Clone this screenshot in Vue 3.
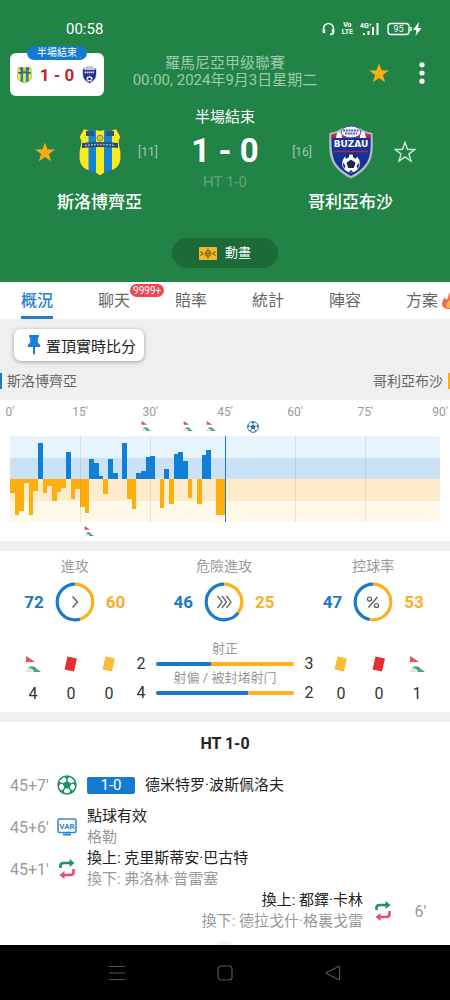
<script setup>
const tabs = [
  { label: '概況', active: true },
  { label: '聊天', badge: '9999+' },
  { label: '賠率' },
  { label: '統計' },
  { label: '陣容' },
  { label: '方案', hot: true },
]

const SLOTS = 92
const at = (slot) => ({ left: `${(slot / SLOTS) * 100}%` })

const ticks = [
  { label: "0'", slot: 0 },
  { label: "15'", slot: 15 },
  { label: "30'", slot: 30 },
  { label: "45'", slot: 46 },
  { label: "60'", slot: 61 },
  { label: "75'", slot: 76 },
  { label: "90'", slot: 92 },
]
const gridLines = [15, 30, 61, 76]

// Positive values: home pressure, negative values: away pressure
const pressure = [
  -14, -36, -32, -4, -36, -12, 36, -14, -7, -22, -13, -9, 27, -20, -10, -28,
  -34, 20, 16, 3, -15, 20, 6, 0, 36, -20, -30, 6, 8, 22, 23, 0, -29, 10, -25,
  25, 27, 18, -19, 0, -25, 24, 29, 0, -36, -36,
]
const bars = pressure.map((v, i) => ({ x: i, y: v > 0 ? 43 - v : 43, h: Math.abs(v), home: v > 0 }))

const homeCorners = [29, 38, 43]
const awayCorners = [17]

const rings = [
  { title: '進攻', home: 72, away: 60, icon: 'one' },
  { title: '危險進攻', home: 46, away: 25, icon: 'three' },
  { title: '控球率', home: 47, away: 53, icon: 'percent' },
]
const share = (a, b) => (a / (a + b)) * 100

const shots = [
  { title: '射正', home: 2, away: 3 },
  { title: '射偏 / 被封堵射门', home: 4, away: 2 },
]
const homeCards = [
  { kind: 'corner', n: 4 },
  { kind: 'red', n: 0 },
  { kind: 'yellow', n: 0 },
]
const awayCards = [
  { kind: 'yellow', n: 0 },
  { kind: 'red', n: 0 },
  { kind: 'corner', n: 1 },
]

const events = [
  { time: "45+7'", kind: 'goal', score: '1-0', main: '德米特罗·波斯佩洛夫' },
  { time: "45+6'", kind: 'var', main: '點球有效', sub: '格勒' },
  { time: "45+1'", kind: 'sub', main: '換上: 克里斯蒂安·巴古特', sub: '換下: 弗洛林·普雷塞' },
  { time: "6'", kind: 'sub', main: '換上: 都鐸·卡林', sub: '換下: 德拉戈什·格裏戈雷', away: true },
]
</script>

<template>
  <div class="page">
    <svg class="defs" aria-hidden="true">
      <symbol id="star" viewBox="0 0 24 24">
        <path d="M12 1.500l2.700 7.600 8 .2-6.400 4.900 2.300 7.800-6.600-4.600L5.400 22l2.300-7.800L1.300 9.300l8-.2z" />
      </symbol>
      <symbol id="ball" viewBox="0 0 24 24">
        <circle cx="12" cy="12" r="10.800" fill="#fff" stroke="currentColor" stroke-width="1.800" />
        <path d="M12 7l5 3.500-1.900 5.700H8.900L7 10.500z" fill="currentColor" />
        <path d="M12 7.500V3M16.400 10.700l4.800-1.500M14.700 15.800l3 4M9.300 15.800l-3 4M7.600 10.700L2.800 9.200" stroke="currentColor" stroke-width="1.700" />
        <path d="M7.500 1.500h9L12 5.200zM22.800 7.500v7.500l-3.500-5.500zM1.200 7.500v7.500l3.500-5.500zM14 22.700l6.500-4.700-4.200.3zM10 22.700l-6.500-4.700 4.200.3z" fill="currentColor" />
      </symbol>
      <symbol id="corner" viewBox="0 0 16 16">
        <path d="M1 0l9 6H1z" fill="#d9505a" />
        <path d="M0 16l4-5 11 5z" fill="#d5eade" />
        <path d="M3 12c3-3 7-2 9 1l4 3H9c0-2-2-4-6-4z" fill="#4aa677" />
      </symbol>
      <symbol id="crest-home" viewBox="0 0 44 50">
        <clipPath id="home-shape">
          <path d="M6 1.500q5 3 10 .8 6 2 12 0 5 2 10-.8l5 8.500q-3 3-1.500 8 2 6 1.500 14-1 9-10 12-8 1.500-11 5-3-3.500-11-5-9-3-10-12-.5-8 1.500-14Q4 13 1 10z" />
        </clipPath>
        <g clip-path="url(#home-shape)">
          <path d="M0 0h44v50H0z" fill="#f6ed1c" />
          <path d="M10.500 0h7.500v50h-7.500zM26 0h8v50h-8z" fill="#1583d6" />
          <path d="M8 4h8v5H8zM28 4h8v5h-8z" fill="#31557c" />
          <circle cx="22" cy="11" r="3" fill="#d8c24b" stroke="#77723d" stroke-width=".8" />
          <path d="M4 16q18-2 36 0v5q-18-2-36 0z" fill="#284d78" />
          <path d="M7 18.500q15-2 30 0" stroke="#91b4c4" stroke-width="1.500" stroke-dasharray="2 1" fill="none" />
        </g>
        <path d="M6 1.500q5 3 10 .8 6 2 12 0 5 2 10-.8l5 8.500q-3 3-1.500 8 2 6 1.500 14-1 9-10 12-8 1.500-11 5-3-3.500-11-5-9-3-10-12-.5-8 1.500-14Q4 13 1 10z" fill="none" stroke="#426a55" stroke-width="1" />
      </symbol>
      <symbol id="crest-away" viewBox="0 0 44 54">
        <path d="M.5 8Q8 7 13 3h18q5 4 12.500 5c.5 12 1 23-4 31Q34 48 22 53.500 10 48 4.500 39C-.5 31 0 20 .5 8z" fill="#b9bcc6" />
        <path d="M2.500 10Q9 8.500 14 5h16q5 3.500 11.500 5c.5 11 .5 21-4 28Q32 46 22 51 12 46 6.500 38 2 31 2.500 10z" fill="#17309a" />
        <path d="M2.500 13V9.500Q9 8.500 14 5h16q5 3.500 11.500 4.500V13z" fill="#c02c3c" />
        <path d="M8 8l5-3v8H7zM36 8l-5-3v8h6z" fill="#fff" />
        <ellipse cx="22" cy="7" rx="10" ry="6" fill="#f4f6fc" stroke="#3b4c98" />
        <path d="M14 5.500h16M16 8.500h12" stroke="#5466a5" stroke-width="1.800" stroke-dasharray="2 .7" />
        <path d="M3 13h38v11H3z" fill="#17309a" />
        <path d="M5 26.500h34" stroke="#b02840" stroke-width="1.500" />
        <circle cx="22" cy="38.500" r="9" fill="#fff" />
        <path d="M22 34.500l4.500 3.300-1.700 5.200h-5.600l-1.700-5.200zM16 30.500l4-1.500v3l-3 2zM28 30.500L24 29v3l3 2zM13.500 37l3 4-1.500 3zM30.500 37l-3 4 1.500 3zM20 47l2-2 2 2z" fill="#1b2550" />
      </symbol>
      <symbol id="swap" viewBox="0 0 16 20">
        <path d="M1.500 9V7q0-3 3-3H11" fill="none" stroke="#1d9260" stroke-width="2.600" />
        <path d="M10.500 0l5 4-5 4z" fill="#1d9260" />
        <path d="M14.500 10v3q0 3-3 3H5" fill="none" stroke="#df506b" stroke-width="2.600" />
        <path d="M5.500 12l-5 4 5 4z" fill="#df506b" />
      </symbol>
    </svg>

    <header class="hero">
      <div class="status">
        <span class="clock">00:58</span>
        <div class="status-icons">
          <svg width="13" height="14" viewBox="0 0 13 14" fill="none" stroke="#fff" stroke-width="1.500">
            <path d="M1.500 10V6.500a5 5 0 0 1 10 0V10q0 2.500-3.500 2.500" /><path d="M2 7v4M11 7v4" stroke-width="2.400" />
          </svg>
          <span class="volte"><span>Vo</span><span>LTE</span></span>
          <span class="signal">
            <svg width="20" height="14" viewBox="0 0 20 14" fill="#fff">
              <path d="M3 11h2v2H3zM7.500 9h2v4h-2zM12 5h2v8h-2zM16.500 1h2v12h-2z" />
              <text x="0" y="6" font-family="Roboto, sans-serif" font-weight="700" font-size="7">4G⁺</text>
            </svg>
          </span>
          <svg class="battery" width="36" height="14" viewBox="0 0 36 14" fill="none">
            <rect x="1" y="1.500" width="21" height="11" rx="3" stroke="#fff" stroke-width="1.400" />
            <path d="M24 5v4" stroke="#fff" stroke-width="1.500" />
            <text x="11.500" y="10" text-anchor="middle" font-family="Roboto, sans-serif" font-size="9" fill="#fff">95</text>
            <path d="M32 0l-6 8h3.500l-1 6 6-8H31z" fill="#fff" />
          </svg>
        </div>
      </div>

      <div class="titlebar">
        <div class="mini">
          <span class="mini-pill">半場結束</span>
          <svg width="15" height="18"><use href="#crest-home" /></svg>
          <span class="mini-score">1 - 0</span>
          <svg width="15" height="18" viewBox="0 0 44 54">
            <use href="#crest-away" width="44" height="54" />
            <path d="M7 19h30" stroke="#fff" stroke-width="5" stroke-dasharray="4 2" />
          </svg>
        </div>
        <div class="league">
          <div>羅馬尼亞甲级聯賽</div>
          <div>00:00, 2024年9月3日星期二</div>
        </div>
        <div class="actions">
          <button aria-label="收藏"><svg width="22" height="22" fill="#fbac14"><use href="#star" /></svg></button>
          <button aria-label="更多">
            <svg width="22" height="22" viewBox="0 0 22 22" fill="#fff"><circle cx="11" cy="2.800" r="2.600" /><circle cx="11" cy="11" r="2.600" /><circle cx="11" cy="19.200" r="2.600" /></svg>
          </button>
        </div>
      </div>

      <div class="match">
        <div class="team">
          <button aria-label="收藏斯洛博齊亞"><svg width="22" height="22" fill="#fbac14"><use href="#star" /></svg></button>
          <svg width="44" height="50"><use href="#crest-home" /></svg>
          <span class="rank home-rank">[11]</span>
          <strong class="team-name">斯洛博齊亞</strong>
        </div>
        <div class="result">
          <div class="phase">半場結束</div>
          <div class="score">1 - 0</div>
          <div class="half">HT 1-0</div>
        </div>
        <div class="team">
          <span class="rank away-rank">[16]</span>
          <svg width="44" height="54" viewBox="0 0 44 54">
            <use href="#crest-away" width="44" height="54" />
            <text x="22" y="22" text-anchor="middle" font-family="DejaVu Sans, sans-serif" font-weight="700" font-size="9" fill="#fff">BUZAU</text>
          </svg>
          <button aria-label="收藏哥利亞布沙"><svg width="22" height="22" fill="none" stroke="#d6ecdd" stroke-width="1.500"><use href="#star" /></svg></button>
          <strong class="team-name">哥利亞布沙</strong>
        </div>
      </div>

      <button class="animation">
        <svg width="18" height="13" viewBox="0 0 18 13">
          <rect width="18" height="13" rx="1" fill="#f5b52d" />
          <g fill="none" stroke="#7b6a1e" stroke-width="1.300"><circle cx="9" cy="6.500" r="2.600" /><path d="M9 1.500v3M9 8.500v3M7 6.500h4M1.500 4.500L4 6.500l-2.500 2M16.500 4.500L14 6.500l2.500 2" /></g>
        </svg>
        動畫
      </button>
    </header>

    <nav class="tabs">
      <button v-for="t in tabs" :key="t.label" :class="['tab', { active: t.active }]">
        {{ t.label }}
        <span v-if="t.badge" class="badge">{{ t.badge }}</span>
        <svg v-if="t.hot" class="fire" width="14" height="17" viewBox="0 0 14 17">
          <path d="M7 0q1 4 4 6 3 3 3 6 0 5-7 5t-7-5q0-4 3-7 0 2 1.500 3Q7 5 7 0z" fill="#ee6a4d" />
          <path d="M7 8q3 3 3 5.500 0 2.500-3 2.500t-3-2.500Q4 11 7 8z" fill="#f9b24e" />
        </svg>
      </button>
    </nav>

    <section class="pinned">
      <button class="pin">
        <svg width="14" height="20" viewBox="0 0 14 20" fill="#1a7fd6"><path d="M2 0h10v2.500h-1.200v5Q13.500 9 13.500 12H8v6.500L7 20l-1-1.500V12H.5q0-3 2.700-4.500v-5H2z" /></svg>
        置頂實時比分
      </button>
      <div class="sides">
        <span class="side home-side">斯洛博齊亞</span>
        <span class="side away-side">哥利亞布沙</span>
      </div>
    </section>

    <section class="chart">
      <div class="track axis">
        <span v-for="t in ticks" :key="t.label" class="on-track" :style="at(t.slot)">{{ t.label }}</span>
      </div>
      <div class="track marks">
        <svg v-for="c in homeCorners" :key="c" class="on-track" :style="at(c)" width="10" height="10"><use href="#corner" /></svg>
        <svg class="on-track goal-mark" :style="at(52)" width="12" height="12"><use href="#ball" /></svg>
      </div>
      <div class="plot">
        <svg class="bars" viewBox="0 0 92 86" preserveAspectRatio="none" shape-rendering="crispEdges">
          <rect v-for="b in bars" :key="b.x" :x="b.x" :y="b.y" width="1" :height="b.h" :fill="b.home ? '#0f80d8' : '#feae0d'" />
        </svg>
        <i v-for="g in gridLines" :key="g" class="line" :style="at(g)"></i>
        <i class="line now" :style="at(46)"></i>
      </div>
      <div class="track lower">
        <svg v-for="c in awayCorners" :key="c" class="on-track" :style="at(c)" width="10" height="10"><use href="#corner" /></svg>
      </div>
    </section>

    <section class="stats">
      <div class="rings">
        <div v-for="r in rings" :key="r.title" class="ring-cell">
          <div class="ring-title">{{ r.title }}</div>
          <div class="ring-row">
            <b class="home">{{ r.home }}</b>
            <svg width="40" height="40" viewBox="0 0 40 40" fill="none">
              <g stroke-width="3.200" transform="rotate(-90 20 20)">
                <circle cx="20" cy="20" r="17.800" stroke="#1a7ac8" pathLength="100" :stroke-dasharray="`${share(r.home, r.away)} 100`" :stroke-dashoffset="-share(r.away, r.home)" />
                <circle cx="20" cy="20" r="17.800" stroke="#fdb01c" pathLength="100" :stroke-dasharray="`${share(r.away, r.home)} 100`" />
              </g>
              <path v-if="r.icon === 'one'" d="M17.500 14.500l5 5.500-5 5.500" stroke="#666" stroke-width="1.500" />
              <path v-else-if="r.icon === 'three'" d="M13.500 14l4.500 6-4.500 6M18 14l4.500 6-4.500 6M22.500 14l4.500 6-4.500 6" stroke="#666" stroke-width="1.300" />
              <g v-else stroke="#555" stroke-width="1.200"><circle cx="16.500" cy="17" r="2" /><circle cx="23.500" cy="23.500" r="2" /><path d="M24.500 15l-9 10.500" /></g>
            </svg>
            <b class="away">{{ r.away }}</b>
          </div>
        </div>
      </div>

      <div class="counts">
        <div v-for="c in homeCards" :key="c.kind" class="count">
          <svg v-if="c.kind === 'corner'" width="16" height="16"><use href="#corner" /></svg>
          <svg v-else width="14" height="16" viewBox="0 0 14 16"><path d="M3.500.5l9.500 2-3 13-9.500-2z" :fill="c.kind === 'red' ? '#e22f34' : '#fabc35'" /></svg>
          <span>{{ c.n }}</span>
        </div>
        <div class="shots">
          <template v-for="s in shots" :key="s.title">
            <span class="shot-n">{{ s.home }}</span>
            <div class="shot-mid">
              <span class="shot-title">{{ s.title }}</span>
              <div class="shot-bar"><i :style="{ width: `${share(s.home, s.away)}%` }"></i></div>
            </div>
            <span class="shot-n">{{ s.away }}</span>
          </template>
        </div>
        <div v-for="c in awayCards" :key="c.kind" class="count">
          <svg v-if="c.kind === 'corner'" width="16" height="16"><use href="#corner" /></svg>
          <svg v-else width="14" height="16" viewBox="0 0 14 16"><path d="M3.500.5l9.500 2-3 13-9.500-2z" :fill="c.kind === 'red' ? '#e22f34' : '#fabc35'" /></svg>
          <span>{{ c.n }}</span>
        </div>
      </div>
    </section>

    <section class="events">
      <h2>HT 1-0</h2>
      <div v-for="e in events" :key="e.time" :class="['event', { right: e.away }]">
        <span class="time">{{ e.time }}</span>
        <span class="event-icon">
          <svg v-if="e.kind === 'goal'" class="goal-icon" width="20" height="20"><use href="#ball" /></svg>
          <svg v-else-if="e.kind === 'var'" width="20" height="18" viewBox="0 0 20 18" fill="none">
            <rect x="1" y="1" width="18" height="13.500" rx="1.500" stroke="#2c86cc" stroke-width="1.500" />
            <path d="M6 16.500h8" stroke="#2c86cc" stroke-width="2" />
            <text x="10" y="10.500" text-anchor="middle" font-family="Roboto, sans-serif" font-weight="700" font-size="8" fill="#2c86cc">VAR</text>
          </svg>
          <svg v-else width="16" height="20"><use href="#swap" /></svg>
        </span>
        <span v-if="e.score" class="event-score">{{ e.score }}</span>
        <div class="event-text">
          <div>{{ e.main }}</div>
          <div v-if="e.sub" class="muted">{{ e.sub }}</div>
        </div>
      </div>
      <i class="peek"></i>
    </section>

    <footer class="sysnav">
      <button aria-label="最近">
        <svg width="16" height="16" viewBox="0 0 16 16" stroke="#555"><path d="M0 1.500h16M0 8h16M0 14.500h16" /></svg>
      </button>
      <button aria-label="主頁">
        <svg width="16" height="16" viewBox="0 0 16 16" fill="none" stroke="#555" stroke-width="1.200"><rect x="1" y="1" width="14" height="14" rx="3" /></svg>
      </button>
      <button aria-label="返回">
        <svg width="16" height="16" viewBox="0 0 16 16" fill="none" stroke="#555" stroke-width="1.200"><path d="M14.500 2v12q0 1-1 .5L1.500 8.500q-1-.5 0-1l12-6q1-.5 1 .5z" /></svg>
      </button>
    </footer>
  </div>
</template>

<style>
body {
  margin: 0;
  background: #000;
}
</style>

<style scoped>
.page {
  display: flex;
  flex-direction: column;
  min-height: 100vh;
  overflow: hidden;
  background: #fff;
  color: #222;
  font-family: Roboto, "Noto Sans CJK SC", sans-serif;
  font-size: 15px;
}
.page * {
  box-sizing: border-box;
}
.defs {
  position: absolute;
  width: 0;
  height: 0;
}
button {
  padding: 0;
  border: 0;
  background: none;
  color: inherit;
  font: inherit;
  cursor: pointer;
}
svg {
  display: block;
  flex: none;
}

.hero {
  background: #228346;
  color: #fff;
  padding-bottom: 14px;
}
.status {
  display: flex;
  align-items: center;
  justify-content: space-between;
  height: 50px;
  padding: 8px 27px 0 66px;
}
.status-icons {
  display: flex;
  align-items: center;
  gap: 7px;
}
.volte {
  display: flex;
  flex-direction: column;
  align-items: center;
  font-size: 7px;
  font-weight: 700;
  line-height: 7px;
}
.titlebar {
  display: grid;
  grid-template-columns: 94px 1fr 94px;
  align-items: center;
  height: 46px;
  padding: 0 10px;
}
.mini {
  position: relative;
  display: flex;
  align-items: center;
  justify-content: space-between;
  align-self: end;
  height: 43px;
  padding: 0 7px;
  border-radius: 6px;
  background: #fff;
}
.mini-pill {
  position: absolute;
  top: -7px;
  left: 50%;
  width: 60px;
  margin-left: -30px;
  border-radius: 7px;
  background: #147bd0;
  font-size: 10px;
  line-height: 14px;
  text-align: center;
}
.mini-score {
  color: #c9202f;
  font-size: 17px;
  font-weight: 700;
}
.league {
  padding-bottom: 3px;
  color: #9ccbac;
  line-height: 17px;
  text-align: center;
  white-space: nowrap;
}
.actions {
  display: flex;
  justify-content: flex-end;
  gap: 21px;
  padding-right: 7px;
}
.match {
  display: grid;
  grid-template-columns: minmax(163px, 1fr) 88px minmax(163px, 1fr);
  padding: 11px 18px 0;
}
.team {
  display: grid;
  grid-template-columns: 1fr 55px 1fr;
  grid-template-rows: 54px 24px;
  row-gap: 11px;
  align-items: center;
  justify-items: center;
  padding-top: 18px;
}
.team-name {
  grid-column: 1 / 4;
  font-size: 17px;
  font-weight: 500;
  line-height: 24px;
}
.rank {
  color: #9ccbac;
  font-size: 12px;
}
.home-rank {
  justify-self: start;
  padding-left: 11px;
}
.away-rank {
  justify-self: end;
  padding-right: 11px;
}
.result {
  text-align: center;
  white-space: nowrap;
}
.phase {
  line-height: 20px;
}
.score {
  font-size: 33px;
  font-weight: 700;
  line-height: 48px;
}
.half {
  color: #5fa67a;
  line-height: 14px;
}
.animation {
  display: flex;
  align-items: center;
  justify-content: center;
  gap: 8px;
  width: 106px;
  height: 30px;
  margin: 24px auto 0;
  border-radius: 15px;
  background: #1c6a38;
  font-size: 13px;
  line-height: 16px;
}

.tabs {
  display: flex;
  gap: 45px;
  height: 37px;
  padding: 0 21px;
  color: #666;
  font-size: 16px;
}
.tab {
  position: relative;
  flex: none;
  border-bottom: 3px solid transparent;
  white-space: nowrap;
}
.tab.active {
  border-color: #1f7fcb;
  color: #1f7fcb;
  font-weight: 500;
}
.badge {
  position: absolute;
  top: 2px;
  left: 32px;
  padding: 0 3px;
  border-radius: 7px;
  background: #ee4750;
  color: #fff;
  font-size: 10px;
  font-weight: 400;
  line-height: 13px;
}
.fire {
  position: absolute;
  top: 10px;
  left: 36px;
}

.pinned {
  padding: 10px 0 11px;
  background: #efefef;
}
.pin {
  display: flex;
  align-items: center;
  gap: 5px;
  height: 32px;
  margin-left: 14px;
  padding: 0 8px 0 13px;
  border-radius: 7px;
  background: #fff;
  box-shadow: 0 1px 4px rgba(0, 0, 0, 0.35);
}
.sides {
  display: flex;
  justify-content: space-between;
  margin-top: 12px;
  color: #666;
  font-size: 14px;
  line-height: 16px;
}
.side {
  border: 0 solid #147bd0;
}
.home-side {
  padding-left: 5px;
  border-left-width: 2px;
}
.away-side {
  padding-right: 5px;
  border-right-width: 2px;
  border-color: #feae0d;
}

.chart {
  padding: 2px 10px 0;
  border-bottom: 10px solid #f0f0f0;
}
.track {
  position: relative;
}
.on-track {
  position: absolute;
  transform: translateX(-50%);
}
.axis {
  height: 19px;
  color: #999;
  font-size: 12px;
  line-height: 20px;
}
.marks {
  height: 15px;
}
.goal-mark {
  color: #2c6fa8;
}
.plot {
  position: relative;
  height: 86px;
  background: linear-gradient(#e8f4fc 25%, #cbe2f6 25% 50%, #fdebcb 50% 75%, #fef8e9 75%);
}
.bars {
  width: 100%;
  height: 100%;
}
.line {
  position: absolute;
  top: 0;
  bottom: 0;
  width: 1px;
  background: rgba(100, 100, 100, 0.15);
}
.line.now {
  background: #147bd0;
}
.lower {
  height: 19px;
  padding-top: 4px;
}

.stats {
  padding-bottom: 8px;
  border-bottom: 10px solid #f0f0f0;
}
.rings {
  display: grid;
  grid-template-columns: repeat(3, 1fr);
  padding: 5px 2px 0 0;
  text-align: center;
}
.ring-title {
  color: #999;
  font-size: 14px;
  line-height: 20px;
}
.ring-row {
  display: flex;
  align-items: center;
  justify-content: center;
  gap: 11px;
  margin-top: 6px;
  font-size: 17px;
}
.home {
  color: #1a7ac8;
}
.away {
  color: #f6b02c;
}
.counts {
  display: flex;
  align-items: flex-start;
  padding: 19px 14px 0;
  color: #333;
  font-size: 16px;
}
.count {
  display: flex;
  flex-direction: column;
  align-items: center;
  gap: 12px;
  width: 38px;
  padding-top: 15px;
  line-height: 20px;
}
.shots {
  display: grid;
  flex: 1;
  grid-template-columns: 26px 1fr 26px;
  align-items: end;
  text-align: center;
}
.shot-n {
  line-height: 12px;
}
.shot-mid {
  padding: 0 2px 4px;
}
.shot-title {
  display: block;
  color: #999;
  font-size: 13px;
  line-height: 16px;
  white-space: nowrap;
}
.shot-bar {
  height: 4px;
  margin-top: 5px;
  border-radius: 2px;
  overflow: hidden;
  background: #feb21d;
}
.shot-bar i {
  display: block;
  height: 100%;
  background: #147bd0;
}

.events {
  position: relative;
  flex: 1;
  padding: 10px 10px 12px;
  overflow: hidden;
}
h2 {
  margin: 0 0 8px;
  font-size: 16px;
  font-weight: 700;
  line-height: 24px;
  text-align: center;
}
.event {
  display: flex;
  align-items: center;
  min-height: 42px;
  line-height: 21px;
}
.time {
  width: 47px;
  color: #999;
  font-size: 16px;
}
.event-icon {
  display: flex;
  justify-content: center;
  width: 20px;
  margin-right: 10px;
}
.goal-icon {
  color: #1d9260;
}
.event-score {
  width: 48px;
  margin-right: 10px;
  border-radius: 2px;
  background: #147bd0;
  color: #fff;
  font-size: 15px;
  line-height: 17px;
  text-align: center;
}
.muted {
  color: #999;
}
.right {
  flex-direction: row-reverse;
  text-align: right;
}
.right .time {
  text-align: center;
  margin-right: -4px;
}
.right .event-icon {
  margin: 0 4px 0 10px;
}
.peek {
  position: absolute;
  bottom: -15px;
  left: 50%;
  width: 20px;
  height: 20px;
  margin-left: -10px;
  border-radius: 10px;
  background: #f3f3f3;
}

.sysnav {
  display: flex;
  align-items: center;
  justify-content: center;
  gap: 92px;
  height: 55px;
  background: #000;
}
</style>
